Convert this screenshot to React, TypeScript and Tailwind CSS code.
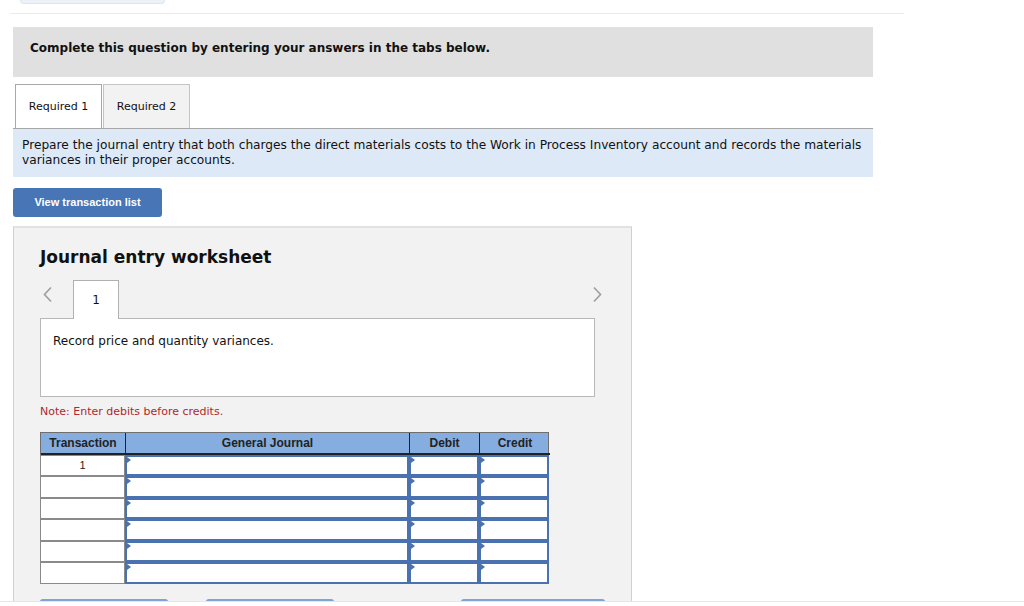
import React from 'react'

const verdana = { fontFamily: '"DejaVu Sans", Verdana, sans-serif' }
const arial = { fontFamily: '"Liberation Sans", Arial, sans-serif' }

const Marker = () => (
  <div className="absolute left-0 top-0 h-0 w-0 border-y-[3px] border-l-[4px] border-y-transparent border-l-[#4a72b0]" />
)

const InputCell = () => (
  <div className="relative h-full border-2 border-[#4a72b0] bg-white">
    <Marker />
  </div>
)

const JournalRow = ({ index }: { index: number }) => (
  <>
    <div
      className="flex h-[21.5px] items-center justify-center border border-[#8a8a8a] bg-white text-[11px] text-[#222]"
      style={arial}
    >
      {index === 0 ? '1' : ''}
    </div>
    <InputCell />
    <InputCell />
    <InputCell />
  </>
)

const HeaderCell = ({ label, last }: { label: string; last?: boolean }) => (
  <div
    className={
      'flex h-[22px] items-center justify-center border-b-2 border-[#222] text-[12px] font-bold text-[#222] ' +
      (last ? '' : 'border-r')
    }
    style={arial}
  >
    {label}
  </div>
)

export default function App() {
  const rows = [0, 1, 2, 3, 4, 5]

  return (
    <div className="relative h-[606px] w-[1024px] overflow-hidden bg-white" style={verdana}>
      {/* top remnant + divider */}
      <div className="ml-[20px] h-[4px] w-[145px] rounded-b-lg border border-t-0 border-[#dfe5ee] bg-[#edf1f8]" />
      <div className="ml-[10px] mt-[9px] h-px w-[894px] bg-[#ececec]" />

      <div className="ml-[13px] w-[860px]">
        <div className="mt-[13px] h-[50px] bg-[#e0e0e0] pl-[17px] pt-[14px] text-[12px] font-bold leading-[14px] text-[#111]">
          Complete this question by entering your answers in the tabs below.
        </div>

        <div className="mt-[8px] flex h-[44px] items-end border-b border-[#a8a8a8] pl-[2px]">
          <div className="flex h-[44px] w-[87px] items-center justify-center border border-b-0 border-[#a8a8a8] bg-white pt-[2px] text-[11px] text-[#111]">
            Required 1
          </div>
          <div className="ml-px flex h-[44px] w-[87px] items-center justify-center border border-b-0 border-[#c4c4c4] bg-[#f2f2f2] pt-[2px] text-[11px] text-[#111]">
            Required 2
          </div>
        </div>

        <div className="h-[48px] bg-[#dde9f7] px-[9px] pt-[9px] text-[12.2px] leading-[15px] text-[#111]">
          Prepare the journal entry that both charges the direct materials costs to the Work in Process Inventory account and records the materials variances in their proper accounts.
        </div>

        <button
          className="mt-[11px] flex h-[29px] w-[149px] items-center justify-center rounded-[3px] bg-[#4775b6] text-[11px] font-bold text-white"
          style={arial}
        >
          View transaction list
        </button>

        <div className="mt-[9px] h-[400px] w-[619px] border-x border-t-2 border-x-[#d0d0d0] border-t-[#e2e2e2] bg-[#f2f2f2] pl-[26px]">
          <div className="pt-[18px] text-[17px] font-bold leading-[22px] text-[#111]">
            Journal entry worksheet
          </div>

          <div className="mt-[12px] flex h-[38px] w-[555px] items-end">
            <div className="flex h-full w-[33px] items-start pl-[2px] pt-[6px]">
              <svg width="11" height="17" viewBox="0 0 11 17" fill="none">
                <path d="M9 1.5L2.5 8.5 9 15.5" stroke="#a0a0a0" strokeWidth="1.7" />
              </svg>
            </div>
            <div className="relative z-10 -mb-px flex h-[39px] w-[46px] items-center justify-center border border-b-0 border-[#b0b0b0] bg-white text-[12px] text-[#111]">
              1
            </div>
            <div className="flex h-full flex-1 items-start justify-end pt-[6px]">
              <svg width="11" height="17" viewBox="0 0 11 17" fill="none" className="-mr-[8px]">
                <path d="M2 1.5L8.5 8.5 2 15.5" stroke="#a0a0a0" strokeWidth="1.7" />
              </svg>
            </div>
          </div>

          <div className="h-[79px] w-[555px] border border-[#b8b8b8] bg-white px-[12px] pt-[13px] text-[12px] text-[#111]">
            Record price and quantity variances.
          </div>

          <div className="mt-[7px] text-[11px] text-[#b0282b]">Note: Enter debits before credits.</div>

          <div className="mt-[11px] w-[509px]">
            <div className="grid grid-cols-[85px_284px_70px_70px] border border-b-0 border-[#6f6f6f] bg-[#85ade0]">
              <HeaderCell label="Transaction" />
              <HeaderCell label="General Journal" />
              <HeaderCell label="Debit" />
              <HeaderCell label="Credit" last />
            </div>
            <div className="grid grid-cols-[85px_284px_70px_70px]">
              {rows.map((r) => (
                <JournalRow key={r} index={r} />
              ))}
            </div>
          </div>

          <div className="mt-[15px] flex">
            <div className="h-[30px] w-[128px] rounded-[3px] border-t-2 border-[#7fa3d3] bg-[#4775b6]" />
            <div className="ml-[38px] h-[30px] w-[128px] rounded-[3px] border-t-2 border-[#7fa3d3] bg-[#4775b6]" />
            <div className="ml-[127px] h-[30px] w-[144px] rounded-[3px] border-t-2 border-[#7fa3d3] bg-[#4775b6]" />
          </div>
        </div>
      </div>

      {/* bottom fixed strip overlaying the page */}
      <div className="absolute bottom-0 left-0 h-[5px] w-full border-t border-[#e6e6e6] bg-white" />
    </div>
  )
}
